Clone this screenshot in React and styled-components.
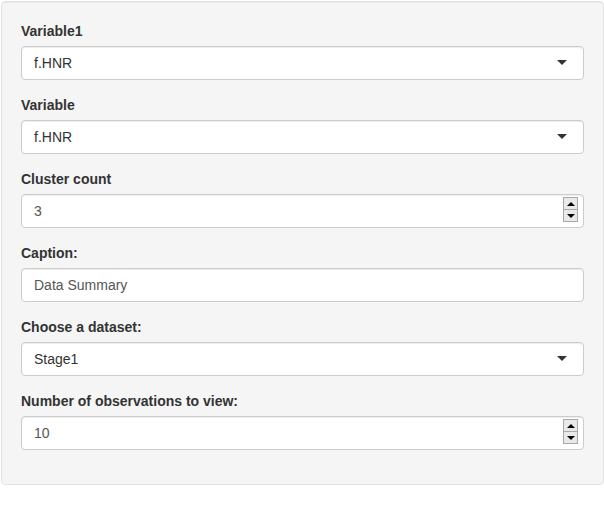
import React from 'react';
import styled, { createGlobalStyle } from 'styled-components';

const GlobalStyle = createGlobalStyle`
  * { box-sizing: border-box; }
  body {
    margin: 0;
    background: #fff;
    font-family: "Liberation Sans", Arial, sans-serif;
    font-size: 14px;
    line-height: 20px;
    color: #333;
  }
`;

const Well = styled.div`
  margin: 1px 0 0 1px;
  width: 603px;
  padding: 19px;
  background-color: #f5f5f5;
  border: 1px solid #e3e3e3;
  border-radius: 4px;
  box-shadow: inset 0 1px 1px rgba(0, 0, 0, 0.05);
`;

const FormGroup = styled.div`
  margin-bottom: 15px;
`;

const Label = styled.label`
  display: block;
  margin-bottom: 5px;
  font-weight: 700;
  font-size: 14px;
  line-height: 20px;
  color: #333;
`;

const Field = styled.div`
  position: relative;
  height: 34px;
`;

const TextInput = styled.input`
  display: block;
  width: 100%;
  height: 34px;
  padding: 6px 12px;
  font-family: inherit;
  font-size: 14px;
  line-height: 20px;
  color: #555;
  background: #fff;
  border: 1px solid #ccc;
  border-radius: 4px;
  box-shadow: inset 0 1px 1px rgba(0, 0, 0, 0.075);
  outline: none;
  appearance: textfield;
  -moz-appearance: textfield;

  &::-webkit-inner-spin-button,
  &::-webkit-outer-spin-button {
    -webkit-appearance: none;
    margin: 0;
  }
`;

const SelectBox = styled.div`
  height: 34px;
  padding: 6px 12px;
  color: #333;
  background: #fff;
  border: 1px solid #ccc;
  border-radius: 4px;
  box-shadow: inset 0 1px 1px rgba(0, 0, 0, 0.075);

  &::after {
    content: '';
    position: absolute;
    top: 50%;
    right: 17px;
    margin-top: -3px;
    border-style: solid;
    border-width: 5px 5px 0 5px;
    border-color: #333 transparent transparent transparent;
  }
`;

const Spinner = styled.div`
  position: absolute;
  top: 3px;
  right: 6px;
  width: 15px;
  display: flex;
  flex-direction: column;
`;

const SpinButton = styled.div`
  height: 13px;
  display: flex;
  align-items: center;
  justify-content: center;
  background: #e9e9e9;
  border: 1px solid #a9a9a9;
  & + & { margin-top: -1px; }

  &::before {
    content: '';
    border-style: solid;
    border-width: ${(p) => (p.$up ? '0 4px 4px 4px' : '4px 4px 0 4px')};
    border-color: ${(p) =>
      p.$up
        ? 'transparent transparent #000 transparent'
        : '#000 transparent transparent transparent'};
  }
`;

function SelectInput({ label, value }) {
  return (
    <FormGroup>
      <Label>{label}</Label>
      <Field>
        <SelectBox>{value}</SelectBox>
      </Field>
    </FormGroup>
  );
}

function NumberInput({ label, value }) {
  return (
    <FormGroup>
      <Label>{label}</Label>
      <Field>
        <TextInput type="number" defaultValue={value} />
        <Spinner>
          <SpinButton $up />
          <SpinButton />
        </Spinner>
      </Field>
    </FormGroup>
  );
}

function PlainInput({ label, value }) {
  return (
    <FormGroup>
      <Label>{label}</Label>
      <Field>
        <TextInput type="text" defaultValue={value} />
      </Field>
    </FormGroup>
  );
}

export default function App() {
  return (
    <>
      <GlobalStyle />
      <Well>
        <SelectInput label="Variable1" value="f.HNR" />
        <SelectInput label="Variable" value="f.HNR" />
        <NumberInput label="Cluster count" value="3" />
        <PlainInput label="Caption:" value="Data Summary" />
        <SelectInput label="Choose a dataset:" value="Stage1" />
        <NumberInput label="Number of observations to view:" value="10" />
      </Well>
    </>
  );
}
